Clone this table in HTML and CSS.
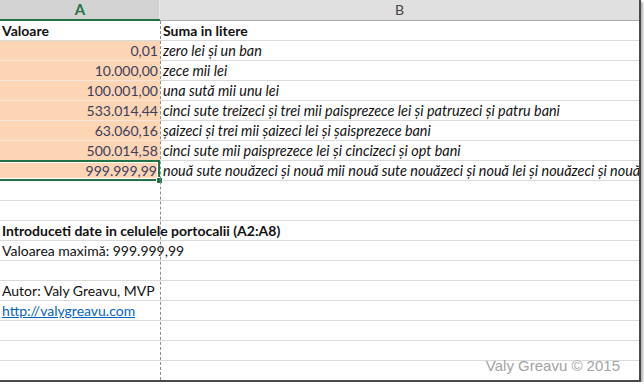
FILE: index.html
```html
<!DOCTYPE html>
<html>
<head>
<meta charset="utf-8">
<link rel="stylesheet" href="styles.css">
</head>
<body>
<div class="frame">
  <div class="sheet">
    <div class="hdr">
      <div class="hcell hsel">A</div>
      <div class="hcell">B</div>
    </div>
    <div class="row"><div class="a bold">Valoare</div><div class="b bold">Suma in litere</div></div>
    <div class="row"><div class="a num">0,01</div><div class="b it">zero lei și un ban</div></div>
    <div class="row"><div class="a num">10.000,00</div><div class="b it">zece mii lei</div></div>
    <div class="row"><div class="a num">100.001,00</div><div class="b it">una sută mii unu lei</div></div>
    <div class="row"><div class="a num">533.014,44</div><div class="b it">cinci sute treizeci și trei mii paisprezece lei și patruzeci și patru bani</div></div>
    <div class="row"><div class="a num">63.060,16</div><div class="b it">șaizeci și trei mii șaizeci lei și șaisprezece bani</div></div>
    <div class="row"><div class="a num">500.014,58</div><div class="b it">cinci sute mii paisprezece lei și cincizeci și opt bani</div></div>
    <div class="row"><div class="a num sel">999.999,99<span class="handle"></span></div><div class="b it">nouă sute nouăzeci și nouă mii nouă sute nouăzeci și nouă lei și nouăzeci și nouă bani</div></div>
    <div class="row"><div class="a"></div><div class="b"></div></div>
    <div class="row"><div class="a"></div><div class="b"></div></div>
    <div class="row"><div class="wide bold">Introduceti date in celulele portocalii (A2:A8)</div></div>
    <div class="row"><div class="wide">Valoarea maximă: 999.999,99</div></div>
    <div class="row"><div class="a"></div><div class="b"></div></div>
    <div class="row"><div class="wide">Autor: Valy Greavu, MVP</div></div>
    <div class="row"><div class="wide"><a class="link" href="#">http://valygreavu.com</a></div></div>
    <div class="row"><div class="a"></div><div class="b"></div></div>
    <div class="row"><div class="a"></div><div class="b"></div></div>
    <div class="row"><div class="a"></div><div class="b"></div></div>
    <div class="pagebreak"></div>
    <div class="watermark">Valy Greavu © 2015</div>
  </div>
</div>
</body>
</html>
```
FILE: styles.css
```css
html, body {
  margin: 0;
  padding: 0;
  background: #ffffff;
}
.frame {
  width: 639px;
  height: 380px;
  border-right: 2px solid #4a4a4a;
  border-bottom: 2px solid #4a4a4a;
  box-shadow: 2px 2px 2px #b0b0b0;
  overflow: hidden;
}
.sheet {
  position: relative;
  height: 100%;
  font-family: Lato, "Liberation Sans", sans-serif;
  font-size: 14px;
  color: #111;
}
.hdr {
  display: grid;
  grid-template-columns: 160px 1fr;
  height: 21px;
}
.hcell {
  background: #e0e0e0;
  border-bottom: 1px solid #ababab;
  text-align: center;
  line-height: 20px;
  color: #444;
  font-size: 14px;
}
.hsel {
  background: #d2d2d2;
  color: #217346;
  font-weight: bold;
  font-size: 15px;
  border-bottom: 2px solid #217346;
  line-height: 19px;
  box-shadow: inset -1px 0 0 #e8e8e8;
}
.row {
  display: grid;
  grid-template-columns: 160px 1fr;
  height: 20px;
  box-sizing: border-box;
  border-bottom: 1px solid #dadada;
  white-space: nowrap;
}
.a, .b, .wide {
  line-height: 19px;
  padding: 0 2px;
}
.b {
  padding-left: 3px;
  overflow: visible;
}
.wide {
  grid-column: 1 / 3;
}
.bold {
  font-weight: bold;
}
.it {
  font-style: italic;
  font-size: 14.4px;
}
.num {
  background: #fcd5b4;
  text-align: right;
  color: #3d3d5e;
  position: relative;
  margin-bottom: -1px;
  border-bottom: 1px solid #f5e6da;
  height: 19px;
}
.sel {
  box-shadow: inset 0 0 0 2px #217346, inset 0 0 0 3px #ffffff;
  margin-left: -3px;
  padding-right: 3px;
  margin-top: -1px;
  height: 21px;
  line-height: 21px;
  border-bottom: none;
}
.handle {
  position: absolute;
  right: -3px;
  bottom: -3px;
  width: 5px;
  height: 5px;
  background: #217346;
  border: 1px solid #ffffff;
}
.link {
  color: #0563c1;
  text-decoration: underline;
}
.pagebreak {
  position: absolute;
  left: 160px;
  top: 21px;
  bottom: 0;
  border-left: 1px dashed #8c8c8c;
}
.watermark {
  position: absolute;
  right: 19px;
  bottom: 6px;
  font-family: "Liberation Sans", Arial, sans-serif;
  font-size: 15px;
  color: #a3a3a3;
}
```
